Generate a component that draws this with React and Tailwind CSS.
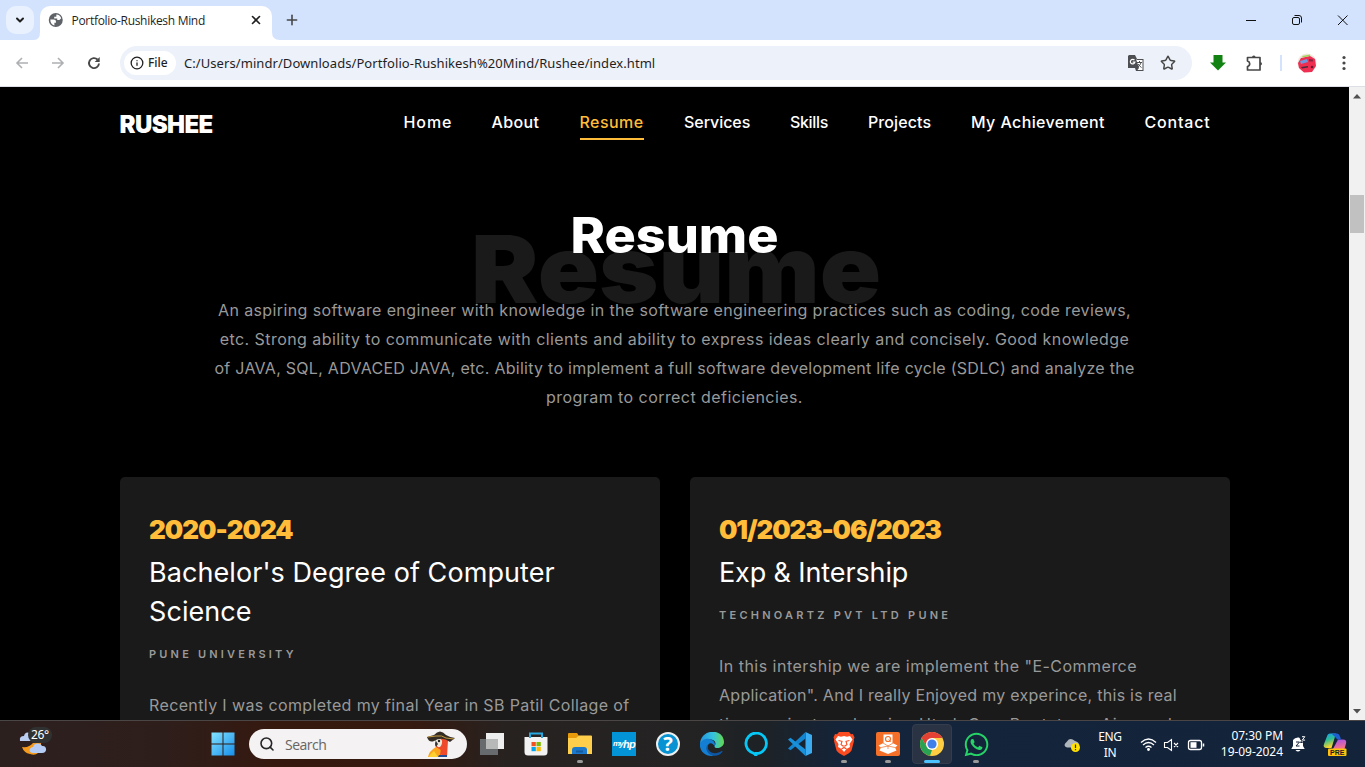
import React from "react";
import { FaWhatsapp } from "react-icons/fa";
import { ChevronDown, X, Plus, Info, Star, Search } from "lucide-react";

const links = [
  ["Home", "w-[48px] tracking-[0.9px] text-white"],
  ["About", "w-[48px] tracking-[0.4px] text-white"],
  ["Resume", "w-[64.5px] tracking-[0.45px] text-[#ffbd39] border-b-2 border-[#ffbd39]"],
  ["Services", "w-[66px] tracking-[-0.05px] text-white"],
  ["Skills", "w-[38px] tracking-[-0.35px] text-white"],
  ["Projects", "w-[63px] tracking-[0.1px] text-white"],
  ["My Achievement", "w-[133.5px] tracking-[0.4px] text-white"],
  ["Contact", "w-[66px] tracking-[0.8px] text-white"],
];

function TabStrip() {
  return (
    <div className="flex h-10 shrink-0 bg-[#d3e3fd] font-['Open_Sans',sans-serif]">
      <div className="ml-1.5 mt-1.5 flex h-7 w-7 items-center justify-center rounded-[10px] bg-[#e9f1fe]">
        <ChevronDown className="h-3 w-3 text-[#1f1f1f]" strokeWidth={4} />
      </div>
      <svg className="mt-8 h-2 w-1.5" viewBox="0 0 6 8"><path d="M6 0Q6 8 0 8H6Z" fill="#fff" /></svg>
      <div className="mt-1.5 flex h-[34px] w-[232px] items-center rounded-t-[10px] bg-white pb-1.5">
        <svg className="ml-2 h-4 w-4" viewBox="0 0 16 16">
          <circle cx="8" cy="8" r="7.200" fill="#5f6368" />
          <path d="M2.400 7.600H6q2.200 0 2.200 1.800v1.400H6.600v3C4 13.200 2.300 11 2.400 7.600ZM8.600 2.300q3.800.2 5 4l-1.800 1.800H9.500V6.400H6.400V4.600h2.200Z" fill="#fff" />
        </svg>
        <span className="ml-2 w-[184px] whitespace-nowrap pt-px text-[12px] leading-4 tracking-[-0.3px] text-[#1f1f1f]">Portfolio-Rushikesh Mind</span>
        <X className="mr-2 h-3.5 w-3.5 shrink-0 -translate-x-px text-[#1f1f1f]" strokeWidth={2.8} />
      </div>
      <svg className="mt-8 h-2 w-2" viewBox="0 0 8 8"><path d="M0 0Q0 8 8 8H0Z" fill="#fff" /></svg>
      <Plus className="ml-1 mt-3 h-4 w-4 text-[#474747]" strokeWidth={2.4} />
      <div className="ml-auto flex items-center">
        <svg className="h-5 w-[119px]" viewBox="0 0 119 20" fill="none" stroke="#111">
          <path d="M0 10.500h10" />
          <rect x="46.500" y="7.500" width="7" height="7" rx="1.500" />
          <path d="M48.500 5.500h4.500q2.500 0 2.500 2.500v4.500M92 5.500l9.500 9.500M101.500 5.500l-9.500 9.500" />
        </svg>
      </div>
    </div>
  );
}

function AddressBar() {
  return (
    <div className="flex h-[47px] shrink-0 items-center border-b border-[#dcdfe4] bg-white font-['Noto_Sans',sans-serif]">
      <svg className="ml-[15px] h-4 w-[90px]" viewBox="0 0 90 16" fill="none" strokeWidth="1.600">
        <path d="M13 8H2M7 3 2 8l5 5M37 8h11M43 3l5 5-5 5" stroke="#aeb0b3" />
        <path d="M84 8.500a5 5 0 1 1-1.500-4" stroke="#474747" strokeWidth="1.900" />
        <path d="M84.700 2v5h-5z" fill="#474747" />
      </svg>
      <div className="ml-[15px] flex h-[34px] w-[1072px] items-center rounded-full bg-[#ecf1fa] pl-1">
        <div className="flex h-6 w-[52px] items-center rounded-full bg-white pl-1.5 text-[12px] font-medium text-[#1f1f1f]">
          <Info className="mr-1 h-3.5 w-3.5" strokeWidth={2.2} />
          <span>File</span>
        </div>
        <span className="ml-2 whitespace-nowrap pt-px text-[13px] tracking-[0.07px] text-[#1f1f1f]">C:/Users/mindr/Downloads/Portfolio-Rushikesh%20Mind/Rushee/index.html</span>
        <svg className="ml-auto mr-4 h-4 w-4 overflow-visible" viewBox="0 0 16 16">
          <path d="M1 0h6l2 4h6.500v12H8l-1-3H0V1z" fill="#4c4e51" />
          <path d="M9 5h5.500v10H9.500L11 13 8 4z" fill="#fff" />
          <path d="M6.500 5.200a2.300 2.300 0 1 0 .4 2H4.700" stroke="#fff" fill="none" strokeWidth="1.200" />
          <path d="M9 7.500h5M11.500 6v1.500m1.500 0c-.5 2-2 3.500-3 4.500m0-3c1 1.500 2 2.500 3.500 3.500" stroke="#4c4e51" fill="none" />
        </svg>
        <Star className="mr-4 h-4 w-4 text-[#474747]" strokeWidth={2.2} />
      </div>
      <svg className="ml-[18px] h-4 w-4" viewBox="0 0 16 16"><path d="M3.500 0h9v7.500H16L8 15.500 0 7.500h3.500z" fill="#128212" /></svg>
      <svg className="ml-[19px] h-[18px] w-[18px]" viewBox="0 0 18 18">
        <path d="M2.500 3.500h12.500v12.500H2.500v-3.500q2.200-.6 2.200-2.700T2.500 7z" fill="none" stroke="#474747" strokeWidth="1.700" strokeLinejoin="round" />
        <path d="M7 3.500q0-2 1.800-2t1.800 2zM15 8q2 0 2 1.800t-2 1.800z" fill="#474747" />
      </svg>
      <div className="ml-[17px] h-4 w-0.5 bg-[#d3e3fd]" />
      <svg className="ml-[15px] h-5 w-5" viewBox="0 0 20 20">
        <circle cx="10" cy="10" r="9.500" fill="#eee9dc" />
        <path d="M1 10 4 5l9-2 5 3 1 7-4 6-8 .5L2 15z" fill="#ee2f52" />
        <path d="m3 8 7-2 1 3-7 2z" fill="#7198dc" /><path d="m12 6 4 .5v2h-4z" fill="#8b2440" />
        <path d="m4 14 7-1v1.500l-6 1z" fill="#4c2c3c" /><circle cx="15" cy="14" r="1.300" fill="#6b1730" />
        <path d="M5 3 13 1.500V3L6 4.500z" fill="#a4d45c" />
      </svg>
      <svg className="ml-[19px] h-4 w-4" viewBox="0 0 16 16" fill="#474747"><circle cx="8" cy="2.500" r="1.600" /><circle cx="8" cy="8" r="1.600" /><circle cx="8" cy="13.500" r="1.600" /></svg>
    </div>
  );
}

function Card({ date, title, place, children }) {
  return (
    <article className="h-[500px] w-[540px] rounded-[5px] bg-[#1a1a1a] pl-[29px] pt-8">
      <div className="h-[42px] whitespace-nowrap text-[26px] font-black leading-[42px] text-[#ffbd39]">{date}</div>
      <h2 className="mt-0.5 whitespace-nowrap text-[27px] leading-[39px] text-white">{title}</h2>
      <div className="mt-[14px] whitespace-nowrap text-[11px] font-semibold leading-[18px] text-[#999]">{place}</div>
      <div className="mt-[28px] whitespace-nowrap text-[16px] leading-[29px] text-[#999]">{children}</div>
    </article>
  );
}

function Page() {
  return (
    <div className="flex min-h-0 flex-1 bg-black font-['Inter',sans-serif]">
      <main className="h-full w-[1349px] overflow-hidden">
        <nav className="flex h-[75px] pl-[119.500px]">
          <div className="mt-[22px] w-[284px] whitespace-nowrap text-[24px] font-black leading-8 tracking-[-0.6px] text-white">RUSHEE</div>
          <div className="mt-[21px] flex gap-10">
            {links.map(([name, style]) => (
              <a key={name} className={`${style} h-8 whitespace-nowrap text-[16px] font-medium leading-[28px]`}>{name}</a>
            ))}
          </div>
        </nav>
        <header className="relative h-[315px] pt-[44px]">
          <div className="absolute left-[471px] top-[47px] origin-left scale-x-[1.077] whitespace-nowrap text-[94px] font-black leading-[120px] text-[#1a1a1a]">Resume</div>
          <h1 className="relative scale-x-[1.065] text-center text-[49px] font-extrabold leading-[60px] text-white">Resume</h1>
          <div className="relative mt-[30px] whitespace-nowrap text-center text-[16px] leading-[29px] text-[#999]">
            <p className="tracking-[0.385px]">An aspiring software engineer with knowledge in the software engineering practices such as coding, code reviews,</p>
            <p className="tracking-[0.44px]">etc. Strong ability to communicate with clients and ability to express ideas clearly and concisely. Good knowledge</p>
            <p className="tracking-[0.275px]">of JAVA, SQL, ADVACED JAVA, etc. Ability to implement a full software development life cycle (SDLC) and analyze the</p>
            <p className="tracking-[0.44px]">program to correct deficiencies.</p>
          </div>
        </header>
        <section className="flex gap-[30px] pl-[120px]">
          <Card
            date={<span className="tracking-[-1px]">2020-2024</span>}
            title={<span className="tracking-[0.07px]">Bachelor's Degree of Computer<br />Science</span>}
            place={<span className="tracking-[3.2px]">PUNE UNIVERSITY</span>}
          >
            <p className="tracking-[0.375px]">Recently I was completed my final Year in SB Patil Collage of</p>
          </Card>
          <Card
            date={<span className="tracking-[-1.15px]">01/2023-06/2023</span>}
            title={<span className="tracking-[-0.12px]">Exp &amp; Intership</span>}
            place={<span className="tracking-[3.250px]">TECHNOARTZ PVT LTD PUNE</span>}
          >
            <p className="tracking-[0.48px]">In this intership we are implement the "E-Commerce</p>
            <p className="tracking-[0.27px]">Application". And I really Enjoyed my experince, this is real</p>
            <p className="tracking-[0.8px]">time project such using Html, Css, Bootstrap, Ajax and</p>
          </Card>
        </section>
      </main>
      <div className="flex w-4 flex-col items-center bg-[#f1f1f1]">
        <svg className="mt-[7px] h-[5px] w-2" viewBox="0 0 8 5"><path d="M0 4.500 4 0l4 4.500z" fill="#505050" /></svg>
        <div className="mt-[96px] h-[38px] w-3.5 bg-[#c1c1c1]" />
        <svg className="mb-[6px] mt-auto h-[5px] w-2" viewBox="0 0 8 5"><path d="m0 0 4 4.500L8 0z" fill="#505050" /></svg>
      </div>
    </div>
  );
}

function Slot({ children, mark }) {
  return (
    <div className="relative flex h-[46px] w-11 items-center justify-center">
      {children}
      {mark && <div className={mark} />}
    </div>
  );
}
const dot = "absolute bottom-1 left-[19px] h-[3px] w-1.5 rounded-full bg-[#999]";

function Taskbar() {
  return (
    <div className="flex h-[47px] shrink-0 border-t border-[#4a4645] bg-[linear-gradient(90deg,#2c201f_0%,#2e1e1b_12%,#35190f_20%,#36190f_30%,#272220_37%,#242323_50%,#1d2226_56%,#14243b_62%,#13233a_100%)] text-white">
      <div className="relative ml-[18px] h-full w-9 font-['Noto_Sans',sans-serif]">
        <svg className="h-[46px] w-9" viewBox="0 0 36 46">
          <path d="M2 20q-1-5 4-5 1-5 6-3l3 8z" fill="#b9cdf0" />
          <path d="M4 26q7 1 11-4h8v4l-3 6q-3 3-8 1-6-1-8-7z" fill="#f49a1c" />
          <path d="M15 32c-5 0-4-6 0-6 1-5 8-4 9-1 5-1 6 7 0 7z" fill="#b5cdf5" />
        </svg>
        <span className="absolute left-[10px] top-1.5 rounded-full bg-[#303232] px-[3px] text-[12px] leading-4 tracking-[-0.4px]">26°</span>
      </div>
      <div className="ml-[147px] flex w-11 items-center justify-center">
        <svg className="h-6 w-6" viewBox="0 0 24 24"><defs><linearGradient id="win" x2="1" y2="1"><stop stopColor="#84e3ff" /><stop offset="1" stopColor="#168eea" /></linearGradient></defs><path d="M.5.500h11v11H.5zM12.500.500h11v11h-11zM.5 12.500h11v11H.5zM12.500 12.500h11v11h-11z" fill="url(#win)" /></svg>
      </div>
      <div className="ml-1 mt-2 flex h-[30px] w-[218px] items-center rounded-full bg-[#f4f2f2] pl-2.5 font-['Open_Sans',sans-serif] text-[#686563]">
        <Search className="mr-2.5 h-4 w-4 text-[#252525]" strokeWidth={2.4} />
        <span className="text-[14px] tracking-[-0.5px]">Search</span>
        <svg className="ml-auto mr-3 h-[27px] w-7" viewBox="0 0 28 27">
          <path d="M8 8q7-4 13 1l-1 17H5l4-10z" fill="#ee4a2c" />
          <path d="M9 16q-7 4-8 10h12l4-5z" fill="#fba51f" /><path d="M7 20q-4 3-5 6h9z" fill="#ffd02f" /><path d="M12 24h8v2h-9z" fill="#234c93" />
          <path d="M15 12q5 4 3 11l-5 1 1-7z" fill="#ee4a2c" />
          <path d="M9 8q7-1 6 4t-4 4l-3-3z" fill="#eee8d9" /><circle cx="12" cy="10" r="1.200" fill="#222" /><path d="M9 10q-2 3 0 6l2-3z" fill="#353335" />
          <path d="M0 6 7 4q6-7 12 0 5 3 9 3l-5 4q-8-6-16-1Q2 12 0 6z" fill="#332c24" /><path d="m1 6 8-1q6-1 10 2l8 1" stroke="#c69b43" fill="none" />
        </svg>
      </div>
      <div className="ml-[3px] flex">
        <Slot><svg className="h-6 w-6" viewBox="0 0 24 24"><path d="M6 1h18v16H6z" fill="#eee" /><path d="M0 7h18v16H0z" fill="#686b6d" /><path d="M6 7h12v10H6z" fill="#b7b8b8" /></svg></Slot>
        <Slot><svg className="h-6 w-6" viewBox="0 0 24 24"><path d="M.5 5h23v15q0 3.500-3.500 3.500H4Q.5 23.500.5 20z" fill="#f2f2f2" /><path d="M6 6V1.500h12V6" fill="none" stroke="#27a8e0" strokeWidth="2" /><path d="M7.500 10h4.300v4.200H7.500z" fill="#f25022" /><path d="M12.500 10h4.300v4.200h-4.300z" fill="#7fba00" /><path d="M7.500 15h4.300v4.200H7.500z" fill="#00a4ef" /><path d="M12.500 15h4.300v4.200h-4.300z" fill="#ffb900" /></svg></Slot>
        <Slot mark={dot}><svg className="h-6 w-6" viewBox="0 0 24 24"><path d="M0 2q0-1 1-1h8l2 3L8 7H0z" fill="#e79b0b" /><path d="M0 6h8l3-2.500h12q1 0 1 1V22H0z" fill="#ffcf4c" /><path d="M4 22v-4q0-3 3-3h9q3 0 3 3v4z" fill="#1b78cb" /><path d="M8 19.500h7" stroke="#12599d" strokeWidth="2" /></svg></Slot>
        <Slot><div className="flex h-6 w-6 items-center justify-center bg-[#0294d6] font-['Liberation_Sans',sans-serif] text-[8px] font-bold italic tracking-[-0.7px]">my<span className="text-[11px]">hp</span></div></Slot>
        <Slot><div className="flex h-6 w-6 items-center justify-center rounded-full border-2 border-[#eee] bg-[#0792d4] font-['Open_Sans',sans-serif] text-[20px] font-bold leading-5">?</div></Slot>
        <Slot>
          <svg className="h-6 w-6" viewBox="0 0 24 24">
            <defs><linearGradient id="edge"><stop stopColor="#2394dc" /><stop offset=".55" stopColor="#35c3e0" /><stop offset="1" stopColor="#65d84b" /></linearGradient></defs>
            <path d="M0 12C.5-3.500 23.500-4.500 24 10c0 6-9 7.500-9.500 4.500 2.500-4 0-7-4.500-7-5.500 0-9 2.500-10 4.500z" fill="url(#edge)" />
            <path d="M0 11.500C1.500 8.500 6 5.500 11 7.500c4 1.500 4.500 5 3.500 7-1-4-7-5-7 1 0 5 5 9 8 8C5 26-1 18 0 11.500z" fill="#147fd2" />
            <path d="M10.500 11.500C7 12 7 17 10 19.500c3 2.500 8 2 11.500-.5.8-.5 1.300.3.8 1C19 24 14 25 10 22.500 5 19 5 12.500 10.500 11.500z" fill="#0d57a5" />
          </svg>
        </Slot>
        <Slot><svg className="h-6 w-6" viewBox="0 0 24 24"><path d="M12 24v-2.500a10.200 10.200 0 1 0-3-.5q2.500.8 3 3" fill="none" stroke="#05c8f7" strokeWidth="2.800" /></svg></Slot>
        <Slot>
          <svg className="h-6 w-6" viewBox="0 0 24 24">
            <path d="M17.500 0 24 3v18l-6.500 3z" fill="#3bacf2" />
            <path d="M17.500 0v6.500L2.500 18.200 0 16.500z" fill="#1384cf" /><path d="m2.500 5.800 15 11.700V24L0 7.500z" fill="#1990d9" />
          </svg>
        </Slot>
        <Slot mark={dot}>
          <svg className="h-6 w-6" viewBox="0 0 24 24">
            <path d="M7 0h10l2 2.200 2-.2 1.500 3.500-.7 2L22 9l-2.500 9.500Q18 21 12 24q-6-3-7.500-5.500L2 9l.2-1.500-.7-2L3 2l2 .2z" fill="#fb4b20" />
            <path d="m6 4 3 .7L12 4l3 .7L18 4l2.500 3.500-3 4.500.5 3-3.500 2-2.500 3-2.500-3L6 15l.5-3-3-4.500z" fill="#fff" />
            <path d="m6.500 8.500 3.500.8-1 3.200 1.800 1.500h2.400l1.800-1.500-1-3.200 3.500-.8M9.500 17l2.500-1.500 2.500 1.500" fill="none" stroke="#fb4b20" strokeWidth="1.100" />
          </svg>
        </Slot>
        <Slot mark={dot}>
          <svg className="h-6 w-6" viewBox="0 0 24 24">
            <rect width="24" height="24" rx="2" fill="#f47029" />
            <path d="M7.500 2.500h9V11l5 2.500-2.500 2 1.500 3L12 22l-8.500-3.500 1.500-3-2.500-2 5-2.500z" fill="#fff" />
            <circle cx="12" cy="7" r="2.500" stroke="#f47029" strokeWidth="1.200" fill="none" /><path d="m12.500 7.500 2.500 2.500M7 11l5 3 5-3M5 15.500l7-1.500 7 1.500M12 14v3" stroke="#f47029" strokeWidth=".7" fill="none" />
          </svg>
        </Slot>
        <Slot mark="absolute bottom-1 left-3.5 h-[3px] w-4 rounded-full bg-[#4cc2ff]">
          <div className="flex h-10 w-10 items-center justify-center rounded border border-[#343d4d] bg-[#293344]">
            <svg className="h-6 w-6" viewBox="0 0 24 24"><circle cx="12" cy="12" r="12" fill="#ffcd42" /><path d="M1.600 6A12 12 0 0 1 22.400 6H12l-5 9z" fill="#e44135" /><path d="M1.600 6 7 15l5 3-2 5.800A12 12 0 0 1 1.600 6z" fill="#28a354" /><circle cx="12" cy="12" r="6" fill="#fff" /><circle cx="12" cy="12" r="4.600" fill="#3f7fe9" /></svg>
          </div>
        </Slot>
        <Slot mark={dot}><FaWhatsapp className="h-[27px] w-[27px] text-[#26d367]" /></Slot>
      </div>
      <div className="ml-auto flex pr-[18px] font-['Noto_Sans',sans-serif] text-[12px]">
        <svg className="mt-4 h-4 w-4" viewBox="0 0 16 16"><path d="M3 10.500q-5-2 0-6Q6 0 11 4q6 2 3 6.500z" fill="#aeb5bb" /><circle cx="11.500" cy="10.500" r="4.500" fill="#ffe000" /><path d="M11.500 7.500V11m0 1v1.200" stroke="#333" strokeWidth="1.200" /></svg>
        <div className="ml-4 mt-2 w-7 text-center leading-4 tracking-[-0.3px]">ENG<br />IN</div>
        <svg className="ml-4 mt-4 h-4 w-[66px]" viewBox="0 0 66 16" fill="none" stroke="#fff" strokeWidth="1.300">
          <path d="M1 5.500q7.500-7 15 0M3 8q5.500-5 11 0M5.500 10.500q3-2.500 6 0" /><circle cx="8.500" cy="12.500" r=".8" fill="#fff" />
          <path d="M24.500 5.500h3l4-3v11l-4-3h-3zM34 6l4 4M38 6l-4 4" strokeWidth="1.100" />
          <rect x="48.500" y="3.500" width="13" height="9" rx="2" /><path d="M50.500 5.200h6v5.600h-6z" fill="#fff" stroke="none" /><path d="M63.500 6.500v3" strokeWidth="1.500" />
        </svg>
        <div className="ml-[9px] mt-[7px] w-[68px] whitespace-nowrap text-right leading-4 tracking-[-0.05px]">07:30 PM<br />19-09-2024</div>
        <svg className="ml-2 mt-[15px] h-4 w-4 overflow-visible" viewBox="0 0 16 16">
          <path d="M2 4Q4 1 8 1.500L12 6v4l1.700 3H.3L2 10zM4.500 14h5q-2.500 3-5 0z" fill="#fff" />
          <path d="M5 6h3.500L5 10h3.500M9.300 3.500h2.200l-2 3h2.200" fill="none" stroke="#17243a" /><path d="M11 .7h2.800l-2.500 3.400h2.800" fill="none" stroke="#fff" />
        </svg>
        <svg className="ml-4 mt-3 h-6 w-6 overflow-visible" viewBox="0 0 24 24">
          <defs>
            <linearGradient id="cop" x2=".3" y2="1"><stop stopColor="#159df4" /><stop offset=".5" stopColor="#31be92" /><stop offset="1" stopColor="#ffd22a" /></linearGradient>
            <linearGradient id="cop2" x2=".3" y2="1"><stop stopColor="#a14ff0" /><stop offset="1" stopColor="#f5718a" /></linearGradient>
          </defs>
          <path d="M4.500 2Q5 .5 7 .5h6L8.500 15H4Q-.5 15 1 11z" fill="url(#cop)" />
          <path d="M15 6.500h5q4 0 3 4L21.500 16H10z" fill="url(#cop2)" />
          <path d="M8.500.5H14q2 0 3 3l1 3h-3.500z" fill="#1e5fd0" /><rect x="5" y="15.500" width="18.500" height="7.500" rx="1" fill="#ffc40c" />
          <text x="14.200" y="21.700" textAnchor="middle" fontFamily="Liberation Sans" fontSize="7" fontWeight="700" fill="#18212b">PRE</text>
        </svg>
      </div>
    </div>
  );
}

export default function App() {
  return (
    <div className="flex h-screen w-full flex-col overflow-hidden">
      <TabStrip />
      <AddressBar />
      <Page />
      <Taskbar />
    </div>
  );
}
